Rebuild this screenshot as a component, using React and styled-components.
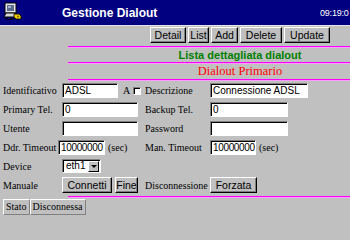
import styled, { createGlobalStyle } from 'styled-components'

const Global = createGlobalStyle`
html, body {
  margin: 0;
  padding: 0;
  background: #c0c0c0;
  overflow: hidden;
}
body {
  width: 350px;
  height: 220px;
  font-family: "Liberation Serif", "Times New Roman", serif;
  font-size: 10px;
  color: #000;
}
`

const Page = styled.div`
width:350px;
height:220px;
overflow:hidden;
background:#c0c0c0;
`

const Header = styled.div`
display:flex;
align-items:center;
height:25px;
background:#000080;
border-bottom:1px solid #e4e4e4;
`
const Logo = styled.div`
width:60px;
padding-left:2px;
display:flex;
align-items:center;
svg { display:block; }
`
const Title = styled.div`
flex:1;
color:#fff;
font-family:"Liberation Sans", Arial, sans-serif;
font-weight:bold;
font-size:12px;
`
const Clock = styled.div`
width:30px;
white-space:nowrap;
color:#fff;
font-family:"Liberation Sans", Arial, sans-serif;
font-size:9px;
letter-spacing:-0.2px;
`

const Toolbar = styled.div`
display:flex;
gap:2px;
margin:1px 0 0 150px;
height:16px;
`
const Button = styled.button`
box-sizing:border-box;
width:${p => p.w}px;
height:${p => p.h || 16}px;
padding:0;
margin:0;
background:#c0c0c0;
border-top:1px solid #fff;
border-left:1px solid #fff;
border-right:1px solid #000;
border-bottom:1px solid #000;
box-shadow: inset -1px -1px 0 #808080;
font-family:"Liberation Sans", Arial, sans-serif;
font-size:10.5px;
color:#000;
line-height:1;
`

const Section = styled.div`
margin-left:68px;
`
const Rule = styled.div`
height:1px;
background:#ff00ff;
border-bottom:1px solid #ff9cff;
margin-top:${p => p.top || 0}px;
`
const Heading = styled.div`
height:${p => p.h}px;
line-height:${p => p.h}px;
padding-left:62px;
text-align:center;
white-space:nowrap;
color:${p => p.color};
font-family:${p => p.serif ? '"Liberation Serif", "Times New Roman", serif' : '"Liberation Sans", Arial, sans-serif'};
font-weight:${p => p.serif ? 'normal' : 'bold'};
font-size:${p => p.serif ? 12.5 : 11}px;
`

const Form = styled.div`
display:flex;
flex-direction:column;
gap:4px;
margin:2px 0 0 3px;
`
const Row = styled.div`
display:grid;
grid-template-columns:59px 83px 65px 1fr;
align-items:center;
height:${p => p.h || 15}px;
`
const Label = styled.span`
white-space:nowrap;
font-size:10px;
`
const Cell = styled.div`
display:flex;
align-items:center;
margin-left:${p => p.shift || 0}px;
`
const Input = styled.div`
box-sizing:border-box;
width:${p => p.w}px;
height:15px;
background:#fff;
border-top:1px solid #808080;
border-left:1px solid #808080;
border-right:1px solid #fff;
border-bottom:1px solid #fff;
box-shadow: inset 1px 1px 0 #000;
padding:0 0 0 2px;
font-family:"Liberation Sans", Arial, sans-serif;
font-size:10px;
letter-spacing:${p => p.tight ? '-0.35px' : '0'};
line-height:13px;
white-space:nowrap;
overflow:hidden;
`
const Unit = styled.span`
margin-left:3px;
font-size:10px;
`
const Check = styled.span`
box-sizing:border-box;
display:inline-block;
width:8px;
height:8px;
margin-left:3px;
background:#fff;
border-top:1px solid #808080;
border-left:1px solid #808080;
border-right:1px solid #fff;
border-bottom:1px solid #fff;
box-shadow: inset 1px 1px 0 #000;
`
const Letter = styled.span`
margin-left:5px;
font-size:10px;
`
const Select = styled.div`
box-sizing:border-box;
display:flex;
width:39px;
height:14px;
background:#fff;
border-top:1px solid #808080;
border-left:1px solid #808080;
border-right:1px solid #fff;
border-bottom:1px solid #fff;
box-shadow: inset 1px 1px 0 #000;
font-family:"Liberation Sans", Arial, sans-serif;
font-size:10px;
line-height:12px;
span { flex:1; padding-left:3px; }
`
const Arrow = styled.div`
box-sizing:border-box;
width:11px;
height:11px;
margin:1px 1px 0 0;
background:#c0c0c0;
border-top:1px solid #fff;
border-left:1px solid #fff;
border-right:1px solid #000;
border-bottom:1px solid #000;
display:flex;
align-items:center;
justify-content:center;
&::after {
  content:'';
  border-left:3px solid transparent;
  border-right:3px solid transparent;
  border-top:3px solid #000;
}
`
const Gap = styled.span`
display:inline-block;
width:${p => p.w}px;
`

const Status = styled.div`
display:flex;
margin:1px 0 0 3px;
`
const StatusCell = styled.div`
box-sizing:border-box;
height:16px;
padding:0 2px;
border-top:1px solid #fff;
border-left:1px solid #fff;
border-right:1px solid #808080;
border-bottom:1px solid #808080;
font-size:10px;
line-height:14px;
white-space:nowrap;
`

const PcIcon = () => (
  <svg width="21" height="21" viewBox="0 0 21 21">
    <rect x="3" y="1" width="11" height="10" fill="#e8e8e8" stroke="#000" strokeWidth="1" />
    <rect x="5" y="3" width="7" height="6" fill="#5a6b8c" />
    <rect x="6" y="4" width="3" height="2" fill="#9fb0d0" />
    <path d="M4 11 L2 15 L13 15 L13 11 Z" fill="#d8d8d8" stroke="#000" strokeWidth="1" />
    <path d="M3 16 Q6 19 10 17 Q12 16 13 17" fill="none" stroke="#000" strokeWidth="1" />
    <path d="M12 12 L17 12 L19 14 L19 17 L14 17 L12 15 Z" fill="#f0d000" stroke="#000" strokeWidth="0.8" />
    <circle cx="16" cy="14.5" r="1" fill="#806000" />
  </svg>
)

export default function App() {
  return (
    <Page>
      <Global />
      <Header>
        <Logo><PcIcon /></Logo>
        <Title>Gestione Dialout</Title>
        <Clock>09:19:0</Clock>
      </Header>
      <Toolbar>
        <Button w={36}>Detail</Button>
        <Button w={21}>List</Button>
        <Button w={27}>Add</Button>
        <Button w={42}>Delete</Button>
        <Button w={46}>Update</Button>
      </Toolbar>
      <Section>
        <Rule top={3} />
        <Heading h={14} color="#008000">Lista dettagliata dialout</Heading>
        <Rule />
        <Heading h={15} color="#ff0000" serif>Dialout Primario</Heading>
        <Rule />
      </Section>
      <Form>
        <Row>
          <Label>Identificativo</Label>
          <Cell><Input w={56}>ADSL</Input><Letter>A</Letter><Check /></Cell>
          <Label>Descrizione</Label>
          <Cell><Input w={98}>Connessione ADSL</Input></Cell>
        </Row>
        <Row>
          <Label>Primary Tel.</Label>
          <Cell><Input w={76}>0</Input></Cell>
          <Label>Backup Tel.</Label>
          <Cell><Input w={78}>0</Input></Cell>
        </Row>
        <Row>
          <Label>Utente</Label>
          <Cell><Input w={76} /></Cell>
          <Label>Password</Label>
          <Cell><Input w={78} /></Cell>
        </Row>
        <Row>
          <Label>Ddr. Timeout</Label>
          <Cell shift={-4}><Input w={47} tight>10000000</Input><Unit>(sec)</Unit></Cell>
          <Label>Man. Timeout</Label>
          <Cell><Input w={46} tight>10000000</Input><Unit>(sec)</Unit></Cell>
        </Row>
        <Row h={14}>
          <Label>Device</Label>
          <Cell><Select><span>eth1</span><Arrow /></Select></Cell>
        </Row>
        <Row h={16}>
          <Label>Manuale</Label>
          <Cell><Button w={50}>Connetti</Button><Gap w={3} /><Button w={23}>Fine</Button></Cell>
          <Label>Disconnessione</Label>
          <Cell><Button w={47}>Forzata</Button></Cell>
        </Row>
      </Form>
      <Section>
        <Rule top={3} />
      </Section>
      <Status>
        <StatusCell>Stato</StatusCell>
        <StatusCell>Disconnessa</StatusCell>
      </Status>
    </Page>
  )
}
